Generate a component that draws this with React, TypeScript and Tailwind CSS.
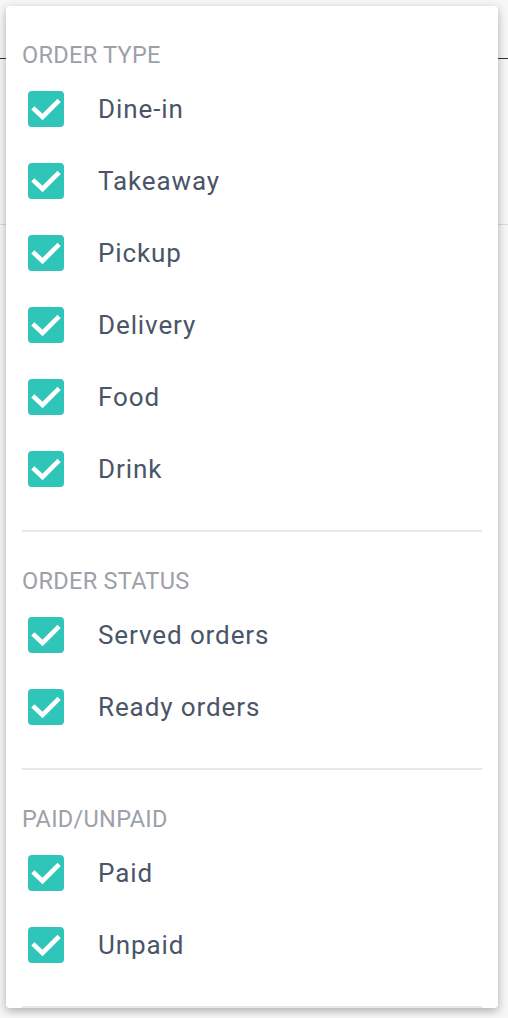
import React from "react";

type Section = { title: string; items: string[] };

const sections: Section[] = [
  { title: "ORDER TYPE", items: ["Dine-in", "Takeaway", "Pickup", "Delivery", "Food", "Drink"] },
  { title: "ORDER STATUS", items: ["Served orders", "Ready orders"] },
  { title: "PAID/UNPAID", items: ["Paid", "Unpaid"] },
];

function CheckBox() {
  return (
    <span className="flex h-[36px] w-[36px] shrink-0 items-center justify-center rounded-[4px] bg-[#2fc5b8]">
      <svg width="36" height="36" viewBox="0 0 36 36" fill="none">
        <path
          d="M6.5 18.5 L14.5 26 L29.5 11"
          stroke="white"
          strokeWidth="4.6"
          strokeLinecap="square"
        />
      </svg>
    </span>
  );
}

export default function App() {
  return (
    <div className="relative h-[1018px] w-[508px] overflow-hidden bg-[#f7f7f7] font-['Roboto',sans-serif]">
      {/* page behind the menu */}
      <div className="pt-[58px]">
        <div className="h-px w-full bg-[#333]" />
        <div className="mt-[165px] h-px w-full bg-[#dadada]" />
      </div>

      {/* filter menu, scrolled content cut at the bottom */}
      <div className="absolute left-[6px] top-[6px] h-[1002px] w-[492px] overflow-hidden rounded-[4px] bg-white px-4 shadow-[0_3px_10px_rgba(0,0,0,0.3)]">
        {sections.map((s) => (
          <div key={s.title} className="border-b-2 border-[#e8e8e8] pb-[25px] pt-[35px]">
            <div className="h-[28px] text-[23.5px] leading-[28px] tracking-[0.3px] text-[#9ca1a8]">{s.title}</div>
            <ul className="mt-[4px]">
              {s.items.map((it) => (
                <li key={it} className="flex h-[72px] items-center gap-[34px] pl-[6px]">
                  <CheckBox />
                  <span className="text-[26px] leading-[30px] tracking-[0.9px] text-[#4a5567]">{it}</span>
                </li>
              ))}
            </ul>
          </div>
        ))}
      </div>
    </div>
  );
}
